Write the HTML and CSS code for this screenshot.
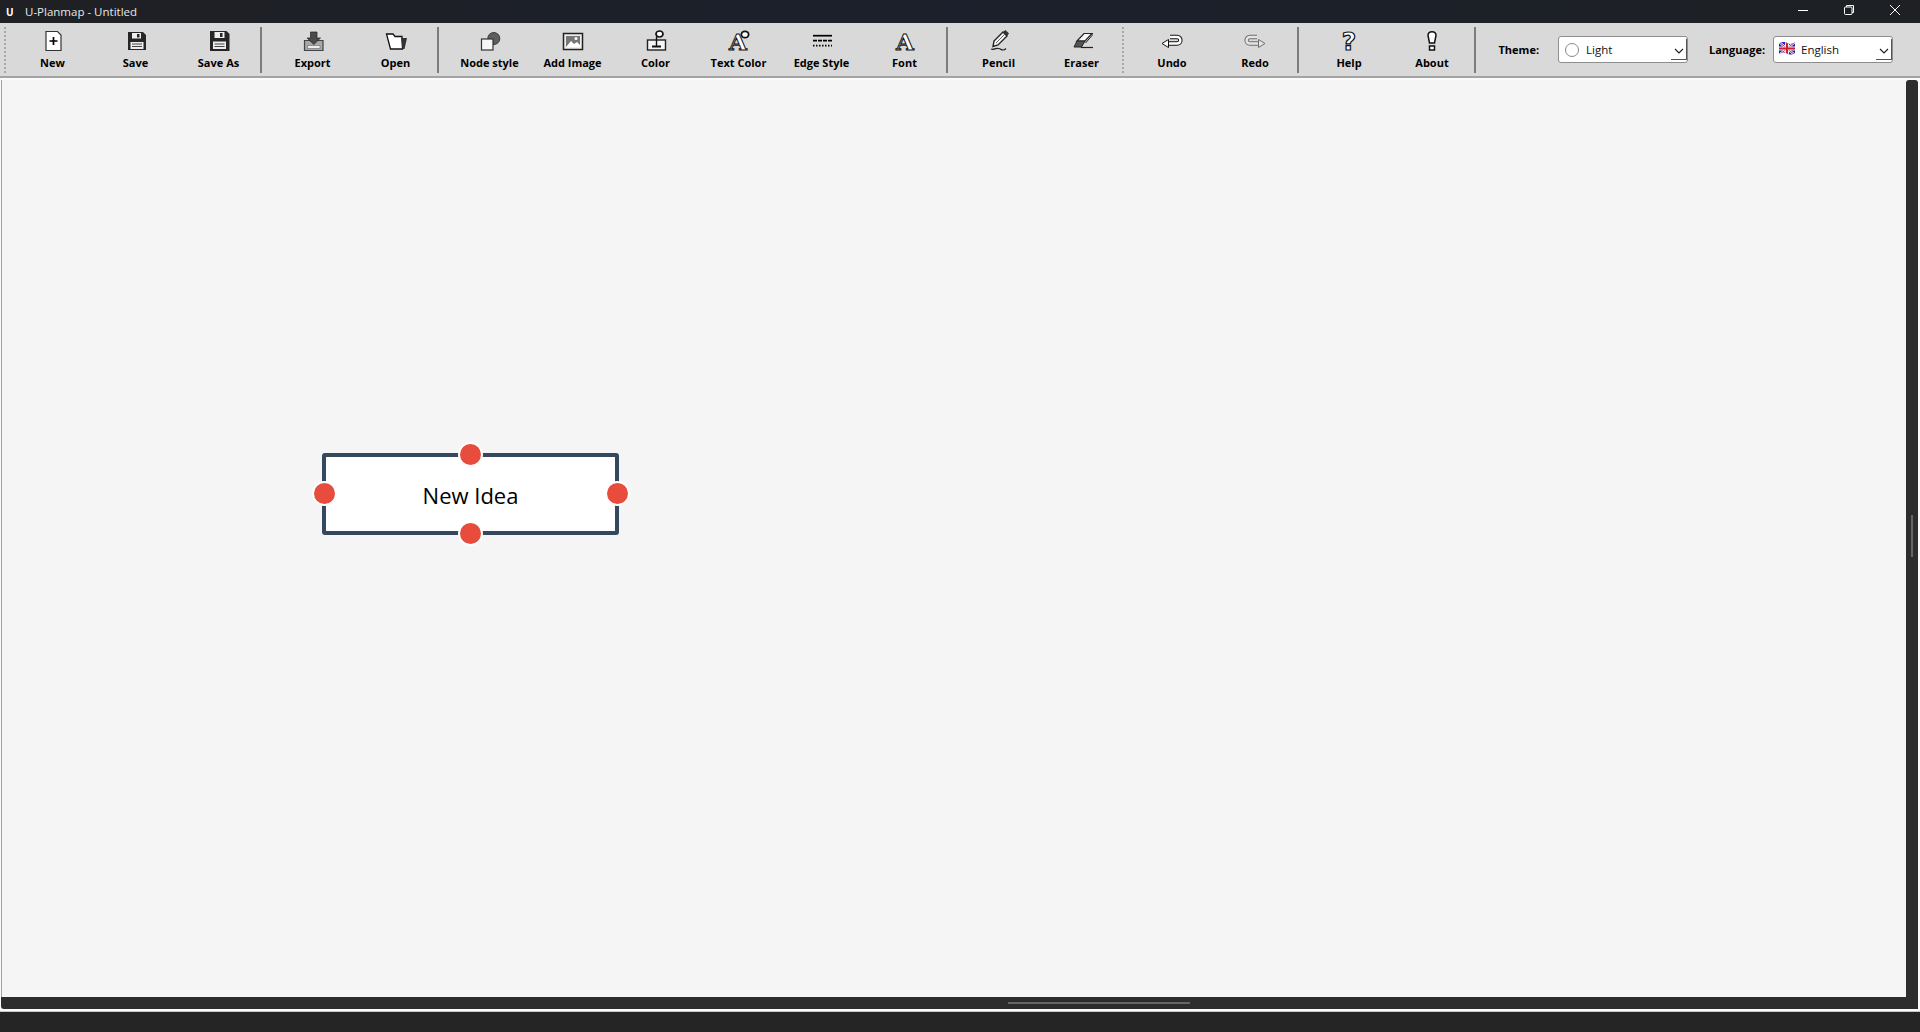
FILE: index.html
```html
<!DOCTYPE html>
<html lang="en">
<head>
    <meta charset="UTF-8">
    <meta name="viewport" content="width=device-width, initial-scale=1.0">
    <title>U-Planmap - Untitled</title>
    <link rel="stylesheet" href="styles.css">
</head>
<body>

<div class="app">
    <!-- Title bar -->
    <div class="titlebar">
        <span class="app-logo">U</span>
        <span class="app-title">U-Planmap - Untitled</span>
        <div class="win-buttons">
            <button class="win-btn"><svg width="14" height="14" viewBox="0 0 14 14"><path d="M2 7.500H12" stroke="#fff" stroke-width="1"/></svg></button>
            <button class="win-btn"><svg width="14" height="14" viewBox="0 0 14 14" fill="none" stroke="#fff"><rect x="2.500" y="4" width="7.500" height="7.500" rx="1"/><path d="M4.500 4V2.500H11.500V9.500H10"/></svg></button>
            <button class="win-btn"><svg width="14" height="14" viewBox="0 0 14 14"><path d="M2 2L12 12M12 2L2 12" stroke="#fff" stroke-width="1"/></svg></button>
        </div>
    </div>

    <!-- Toolbar -->
    <div class="toolbar">
        <span class="handle"></span>

        <button class="tool">
            <svg viewBox="0 0 24 24"><path d="M5 2.500H16.500L20 6V21.500H5Z" fill="#fff" stroke="#333" stroke-width="1.200"/><path d="M12.500 8V16M8.500 12H16.500" stroke="#000" stroke-width="1.700"/></svg>
            <span>New</span>
        </button>
        <button class="tool">
            <svg viewBox="0 0 24 24"><path d="M4 3H19L22 6V21H4Z" fill="#262626"/><rect x="8" y="4" width="9" height="5.500" fill="#eee"/><rect x="13" y="5" width="2.500" height="3.500" fill="#262626"/><rect x="6.500" y="13" width="13" height="7" fill="#eee"/><path d="M8 15H18M8 17.500H18" stroke="#444"/></svg>
            <span>Save</span>
        </button>
        <button class="tool">
            <svg viewBox="0 0 24 24"><path d="M3 2H19.500L22.500 5V22H3Z" fill="#262626"/><rect x="7.500" y="3" width="10" height="6" fill="#eee"/><rect x="13" y="4" width="2.500" height="4" fill="#262626"/><rect x="6" y="12.500" width="13" height="7.500" fill="#eee"/><path d="M7.500 15H17.500M7.500 17.500H17.500" stroke="#444"/></svg>
            <span>Save As</span>
        </button>
        <span class="sep"></span>

        <button class="tool">
            <svg viewBox="0 0 24 24"><path d="M3.500 11.500H22V21.500H3.500Z" fill="#a8a8a8" stroke="#444" stroke-width="1.200"/><path d="M6.500 16.500H19V19.500H6.500Z" fill="#eee" stroke="#666" stroke-width=".6"/><path d="M9.500 3H16V9H19.500L12.800 15.500L6 9H9.500Z" fill="#4a4a4a" stroke="#222" stroke-width=".7"/></svg>
            <span>Export</span>
        </button>
        <button class="tool">
            <svg viewBox="0 0 24 24"><path d="M2.500 5H9L11 7.500H18L18.500 20H6.500Z" fill="#fff" stroke="#111" stroke-width="1.300"/><path d="M17 9H23L20.500 20H18.500Z" fill="#333"/></svg>
            <span>Open</span>
        </button>
        <span class="sep"></span>

        <button class="tool">
            <svg viewBox="0 0 24 24"><circle cx="15.800" cy="9.500" r="6" fill="#5e5e5e" stroke="#3a3a3a"/><rect x="3.500" y="10" width="11.500" height="11" fill="#f6f6f6" stroke="#333" stroke-width="1.200"/></svg>
            <span>Node style</span>
        </button>
        <button class="tool">
            <svg viewBox="0 0 24 24"><rect x="2.500" y="4.500" width="19" height="16" fill="#eee" stroke="#222" stroke-width="1.500"/><rect x="5" y="7" width="14" height="11" fill="#777"/><path d="M5 18L10 12L13 15L16 13L19 16V18Z" fill="#fff"/><circle cx="15" cy="9.500" r="1.500" fill="#fff"/></svg>
            <span>Add Image</span>
        </button>
        <button class="tool">
            <svg viewBox="0 0 24 24"><path d="M12.500 8L15 5" stroke="#111" stroke-width="1.300"/><ellipse cx="15.500" cy="5" rx="3.500" ry="3" fill="#fff" stroke="#111" stroke-width="1.700"/><rect x="3.500" y="11" width="18" height="10" fill="#f6f6f6" stroke="#222" stroke-width="1.400"/><path d="M12.500 8V18" stroke="#111" stroke-width="1.400"/><path d="M8 17.500H17" stroke="#111" stroke-width="2"/></svg>
            <span>Color</span>
        </button>
        <button class="tool">
            <svg class="icon-tall" viewBox="0 -6 24 34"><text x="11" y="21" class="icon-letter">A</text><ellipse cx="18" cy="5.500" rx="3.600" ry="3.200" fill="#fff" stroke="#111" stroke-width="1.800"/></svg>
            <span>Text Color</span>
        </button>
        <button class="tool">
            <svg viewBox="0 0 24 24"><path d="M3 6.700H22" stroke="#000" stroke-width="1.700"/><path d="M3 11.700H22" stroke="#000" stroke-width="1.700" stroke-dasharray="4 1"/><path d="M3 16.700H22" stroke="#000" stroke-width="1.700" stroke-dasharray="1.500 1.500"/></svg>
            <span>Edge Style</span>
        </button>
        <button class="tool">
            <svg class="icon-tall" viewBox="0 -6 24 34"><text x="12" y="21" class="icon-letter">A</text></svg>
            <span>Font</span>
        </button>
        <span class="sep"></span>

        <button class="tool">
            <svg viewBox="0 0 24 24"><path d="M7 12L16 3L20 7L11 16L6 17.500Z" fill="#f6f6f6" stroke="#222" stroke-width="1.400"/><path d="M16 3L20 7L22 4.500L18.500 1Z" fill="#333"/><path d="M9 14L18 5" stroke="#666"/><path d="M4 20C7 21.500 8 18.500 11.500 19.500S16 22.500 19 19.500" fill="none" stroke="#222" stroke-width="1.200"/></svg>
            <span>Pencil</span>
        </button>
        <button class="tool">
            <svg viewBox="0 0 24 24"><path d="M7 12L14 4.500H22L15 12Z" fill="#f6f6f6" stroke="#222" stroke-width="1.200"/><path d="M7 12L4 18H11.500L15 12Z" fill="#555" stroke="#222"/><path d="M11 18.500H23" stroke="#222" stroke-width="1.200"/><path d="M22 4.500L22 6.500L15.500 14" fill="none" stroke="#222"/></svg>
            <span>Eraser</span>
        </button>
        <span class="handle handle-mid"></span>

        <button class="tool">
            <svg viewBox="0 0 24 24"><path d="M8 14.500H17C21.500 14.500 21.500 8 17 8H10" fill="none" stroke="#111" stroke-width="4.400"/><path d="M8 14.500H17C21.500 14.500 21.500 8 17 8H10" fill="none" stroke="#fff" stroke-width="2.400"/><path d="M2 14.500L8.500 10.500V18.500Z" fill="#fff" stroke="#111"/></svg>
            <span>Undo</span>
        </button>
        <button class="tool">
            <svg viewBox="0 0 24 24"><path d="M16 14.500H7C2.500 14.500 2.500 8 7 8H14" fill="none" stroke="#6e6e6e" stroke-width="4.400"/><path d="M16 14.500H7C2.500 14.500 2.500 8 7 8H14" fill="none" stroke="#e4e4e4" stroke-width="2.400"/><path d="M22 14.500L15.500 10.500V18.500Z" fill="#e4e4e4" stroke="#6e6e6e"/></svg>
            <span>Redo</span>
        </button>
        <span class="sep"></span>

        <button class="tool">
            <svg class="icon-tall" viewBox="0 -6 24 34"><text x="12" y="21" class="icon-letter icon-mark">?</text></svg>
            <span>Help</span>
        </button>
        <button class="tool">
            <svg viewBox="0 0 24 24"><path d="M8 6.500C8 1.500 16 1.500 16 6.500L14.500 14H9.500Z" fill="#fff" stroke="#111" stroke-width="1.500"/><rect x="9.500" y="17" width="5" height="4" fill="#fff" stroke="#111" stroke-width="1.500"/></svg>
            <span>About</span>
        </button>
        <span class="sep"></span>

        <label class="combo-label theme-label">Theme:</label>
        <div class="combo combo-theme">
            <span class="theme-dot"></span>
            <span>Light</span>
            <span class="combo-arrow"><svg width="10" height="6" viewBox="0 0 10 6"><path d="M1 1L5 5L9 1" fill="none" stroke="#222" stroke-width="1.200"/></svg></span>
        </div>
        <label class="combo-label lang-label">Language:</label>
        <div class="combo combo-lang">
            <svg class="flag" width="16" height="13" viewBox="0 0 16 13">
                <clipPath id="flagWave"><path d="M0 1.500C3 -0.500 6 -0.500 8 1C10 2.500 13 2 16 0.500V11C13 13 10 13 8 11.500C6 10 3 10 0 12Z"/></clipPath>
                <g clip-path="url(#flagWave)">
                    <rect width="16" height="13" fill="#1a22b8"/>
                    <path d="M0 0L16 13M16 0L0 13" stroke="#f2e6ee" stroke-width="2.500"/>
                    <path d="M0 0L16 13M16 0L0 13" stroke="#c8202e" stroke-width="1"/>
                    <path d="M8 0V13M0 6.500H16" stroke="#f2e6ee" stroke-width="4"/>
                    <path d="M8 0V13M0 6.500H16" stroke="#c8202e" stroke-width="2"/>
                </g>
            </svg>
            <span>English</span>
            <span class="combo-arrow"><svg width="10" height="6" viewBox="0 0 10 6"><path d="M1 1L5 5L9 1" fill="none" stroke="#222" stroke-width="1.200"/></svg></span>
        </div>
    </div>

    <!-- Canvas + scrollbars -->
    <div class="workspace">
        <div class="view-row">
            <div class="canvas">
                <div class="node">
                    <span class="node-text">New Idea</span>
                    <span class="dot dot-top"></span>
                    <span class="dot dot-right"></span>
                    <span class="dot dot-bottom"></span>
                    <span class="dot dot-left"></span>
                </div>
            </div>
            <div class="vscroll"><span class="vthumb"></span></div>
        </div>
        <div class="hscroll"><span class="hthumb"></span></div>
    </div>

    <div class="footer"></div>
</div>

</body>
</html>
```

FILE: styles.css
```css
* {
    box-sizing: border-box;
}
body {
    margin: 0;
    font-family: "Open Sans", "Noto Sans", Arial, sans-serif;
    background-color: #252525;
}
.app {
    display: flex;
    flex-direction: column;
    height: 100vh;
    overflow: hidden;
}

/* title bar */
.titlebar {
    display: flex;
    align-items: center;
    height: 23px;
    flex: none;
    padding-left: 6px;
    color: #e8e8e8;
    font-size: 11.5px;
    background: linear-gradient(90deg, #1f2024, #1b202c 50%, #1e2024);
}
.app-logo {
    width: 19px;
    font-weight: 700;
    font-size: 10px;
    color: #fff;
}
.win-buttons {
    display: flex;
    margin-left: auto;
    padding-right: 2px;
}
.win-btn {
    display: flex;
    align-items: center;
    justify-content: center;
    width: 46px;
    height: 20px;
    padding: 0;
    margin-bottom: 3px;
    background: none;
    border: none;
}

/* toolbar */
.toolbar {
    display: flex;
    align-items: center;
    flex: none;
    height: 55px;
    background-color: #d9d9d9;
    border-bottom: 2px solid #a3a3a3;
}
.handle {
    flex: none;
    width: 2px;
    height: 46px;
    margin: 0 5px 0 4px;
    border-left: 2px dotted #a8a8a8;
}
.handle-mid {
    margin: 0 6.5px 0 -1px;
}
.tool {
    display: flex;
    flex-direction: column;
    align-items: center;
    align-self: flex-end;
    flex: none;
    width: 83px;
    height: 47px;
    padding: 0;
    font-family: inherit;
    font-size: 11px;
    font-weight: 700;
    color: #000;
    background: none;
    border: none;
}
.tool svg {
    display: block;
    width: 24px;
    height: 24px;
    margin-bottom: 2px;
}
/* taller box so a glyph's line box stays inside its svg */
.tool .icon-tall {
    height: 34px;
    margin-top: -6px;
    margin-bottom: -2px;
}
.tool span {
    line-height: 16px;
}
.icon-letter {
    font-family: "DejaVu Serif", serif;
    font-size: 23px;
    font-weight: 700;
    text-anchor: middle;
    fill: #fff;
    stroke: #111;
    stroke-width: 1;
}
.icon-mark {
    font-family: "DejaVu Sans", sans-serif;
    font-size: 25px;
    stroke-width: 1.2;
}
.sep {
    flex: none;
    width: 2px;
    height: 46px;
    margin-right: 9px;
    background-color: #7d7d7d;
}
.combo-label {
    font-size: 11px;
    font-weight: 700;
    color: #000;
}
.theme-label {
    margin-left: 14px;
    width: 59.5px;
}
.lang-label {
    margin-left: 21px;
    width: 64px;
}
.combo {
    position: relative;
    display: flex;
    align-items: center;
    gap: 7px;
    height: 27px;
    padding-left: 6px;
    font-size: 11.5px;
    color: #111;
    background-color: #fff;
    border: 1px solid #8e8e8e;
    border-radius: 3px;
}
.combo-theme {
    width: 130px;
}
.combo-lang {
    width: 120px;
    gap: 6px;
    padding-left: 5px;
}
.theme-dot {
    width: 14px;
    height: 14px;
    background-color: #fff;
    border: 1px solid #888;
    border-radius: 50%;
}
.flag {
    flex: none;
    margin-bottom: 3px;
}
/* sunken corner the old style draws round the arrow */
.combo-arrow {
    position: absolute;
    right: 0;
    bottom: 2px;
    display: flex;
    justify-content: center;
    width: 16px;
    height: 21px;
    padding-top: 9px;
    border-right: 1px solid #555;
    border-bottom: 1px solid #555;
}

/* canvas */
.workspace {
    display: flex;
    flex-direction: column;
    flex: none;
    height: 933px;
    padding-top: 2px;
    background-color: #fbfbfb;
}
.view-row {
    display: flex;
    height: 917px;
    margin-left: 1px;
    margin-right: 2px;
    border-left: 1px solid #a0a0a0;
}
.canvas {
    position: relative;
    width: 1904px;
    background-color: #f5f5f5;
}
.node {
    position: absolute;
    left: 320px;
    top: 373px;
    display: flex;
    align-items: center;
    justify-content: center;
    width: 297px;
    height: 82px;
    padding-top: 1px;
    background-color: #fff;
    border: 4px solid #34495e;
    border-radius: 3px;
}
.node-text {
    font-family: "Open Sans", sans-serif;
    font-size: 22px;
    color: #000;
}
.dot {
    position: absolute;
    width: 25px;
    height: 25px;
    background-color: #e74c3c;
    border: 2px solid #fff;
    border-radius: 50%;
}
.dot-top {
    left: 131.5px;
    top: -15px;
}
.dot-bottom {
    left: 131.5px;
    bottom: -14.5px;
}
.dot-left {
    left: -14.5px;
    top: 23.5px;
}
.dot-right {
    right: -14.5px;
    top: 23.5px;
}
.vscroll {
    position: relative;
    width: 12px;
    background-color: #2d2d2d;
    border-radius: 3px 3px 0 0;
}
.vthumb {
    position: absolute;
    left: 5px;
    top: 435px;
    width: 2px;
    height: 42px;
    background-color: #666;
}
.hscroll {
    position: relative;
    height: 12px;
    margin-left: 1px;
    margin-right: 2px;
    background-color: #2d2d2d;
    border-radius: 0 0 0 3px;
}
.hthumb {
    position: absolute;
    left: 1007px;
    top: 5px;
    width: 182px;
    height: 2px;
    background-color: #666;
}
.footer {
    flex: 1;
    background-color: #252525;
    border-top: 1px solid #c8c8c8;
}
```
